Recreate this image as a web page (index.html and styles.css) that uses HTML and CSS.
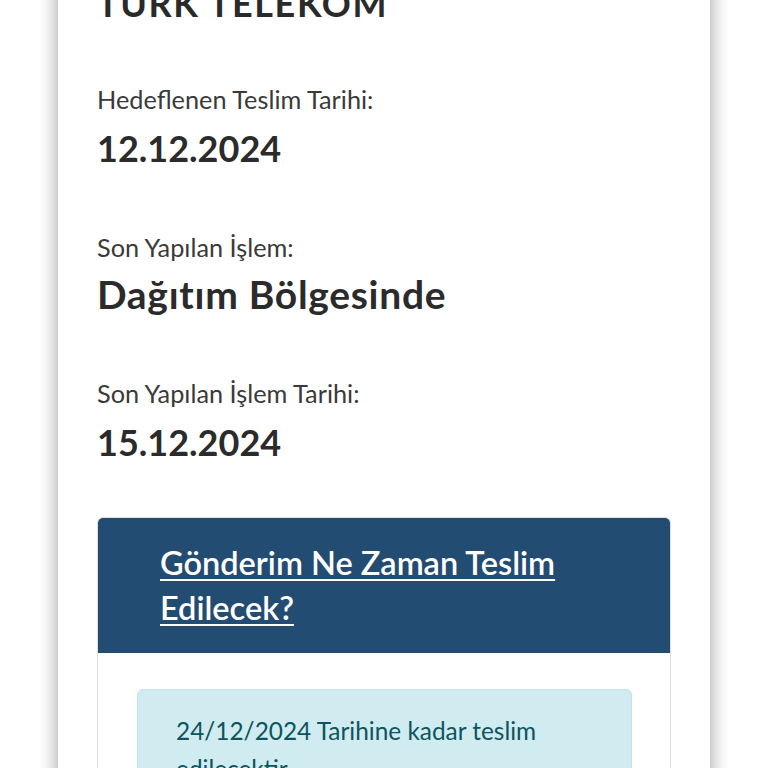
FILE: index.html
```html
<!DOCTYPE html>
<html lang="tr">
<head>
<meta charset="utf-8">
<title>Gönderi Takip</title>
<link rel="stylesheet" href="styles.css">
</head>
<body>
<main class="page">
  <section class="card">
    <h2 class="title">TÜRK TELEKOM</h2>

    <div class="field">
      <div class="label">Hedeflenen Teslim Tarihi:</div>
      <div class="value">12.12.2024</div>
    </div>

    <div class="field">
      <div class="label">Son Yapılan İşlem:</div>
      <div class="value value-text">Dağıtım Bölgesinde</div>
    </div>

    <div class="field field-last">
      <div class="label">Son Yapılan İşlem Tarihi:</div>
      <div class="value">15.12.2024</div>
    </div>

    <div class="info">
      <div class="info-header">
        <a class="info-link" href="#">Gönderim Ne Zaman Teslim Edilecek?</a>
      </div>
      <div class="info-body">
        <div class="alert">24/12/2024 Tarihine kadar teslim edilecektir.</div>
      </div>
    </div>
  </section>
</main>
</body>
</html>
```
FILE: styles.css
```css
html, body {
  margin: 0;
  padding: 0;
  background: #ffffff;
  overflow: hidden;
}

body {
  font-family: Lato, "Noto Sans", sans-serif;
  color: #333333;
}

.page {
  padding: 0 58px 0 58px;
}

.card {
  margin-top: -60px;
  padding: 42px 39px 60px 39px;
  background: #ffffff;
  box-shadow: 0 0 16px 3px rgba(0, 0, 0, 0.3);
  min-height: 900px;
}

.title {
  margin: 0 0 57px 0;
  font-size: 36px;
  line-height: 42px;
  font-weight: 700;
  letter-spacing: 1.6px;
  color: #2a2a2a;
}

.field {
  margin-bottom: 59px;
}

.field-last {
  margin-bottom: 53px;
}

.label {
  font-size: 25.3px;
  line-height: 36px;
  font-weight: 400;
  color: #3a3a3a;
}

.value {
  margin-top: 9px;
  font-size: 36px;
  line-height: 44px;
  font-weight: 700;
  color: #2b2b2b;
}

.value-text {
  margin-top: 7px;
  font-size: 39px;
  letter-spacing: 0.7px;
}

.info {
  border: 1px solid #dedede;
  border-radius: 6px;
  overflow: hidden;
}

.info-header {
  background: #234c73;
  padding: 22px 40px 23px 62px;
}

.info-link {
  font-size: 32.5px;
  line-height: 45px;
  font-weight: 600;
  letter-spacing: 0;
  color: #ffffff;
  text-decoration: underline;
  text-decoration-thickness: 2px;
  text-underline-offset: 4px;
}

.info-body {
  padding: 36px 38px 40px 39px;
  background: #ffffff;
}

.alert {
  background: #d1ecf1;
  border: 1px solid #bee5eb;
  border-radius: 6px;
  padding: 22px 38px 22px 38px;
  font-size: 24.4px;
  line-height: 38px;
  color: #0c5460;
}
```
